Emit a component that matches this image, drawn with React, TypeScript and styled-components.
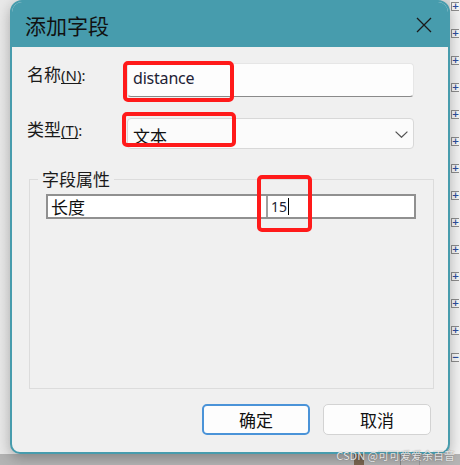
import React from 'react';
import styled, { createGlobalStyle } from 'styled-components';

const GlobalStyle = createGlobalStyle`
  html, body {
    margin: 0;
    padding: 0;
  }
  body {
    font-family: 'Noto Sans', 'Noto Sans CJK SC', sans-serif;
    background: #ececec;
  }
`;

const TEAL = '#479cad';

const Page = styled.div`
  position: relative;
  width: 460px;
  height: 465px;
  overflow: hidden;
  background: #ececec;
`;

const Backdrop = styled.div`
  display: flex;
  flex-direction: column;
  height: 100%;
`;

const Upper = styled.div`
  flex: 1;
  display: flex;
`;

const MainArea = styled.div`
  flex: 1;
  background: linear-gradient(to right, #e9e9e9, #dcdcdc);
`;

const TreeColumn = styled.div`
  width: 9px;
  padding: 2px 0 0 1px;
  display: flex;
  flex-direction: column;
  gap: 18px;
  background: #f2f2f2;
`;

const Expander = styled.div`
  width: 8px;
  height: 9px;
  box-sizing: border-box;
  border: 1px solid #8c8c8c;
  border-right: none;
  border-radius: 1px 0 0 1px;
  background: #f6f6f6;
  display: flex;
  align-items: center;
  justify-content: center;
  color: #2d4f9e;
  font-size: 9px;
  line-height: 1;
  font-family: 'DejaVu Sans', sans-serif;
  font-weight: bold;
`;

const BottomBar = styled.div`
  height: 11px;
  display: flex;
  background: #b4b4b4;
`;

const BarGap = styled.div<{ $w: number }>`
  width: ${({ $w }) => $w}px;
`;

const BarMark = styled.div<{ $w: number; $c: string }>`
  width: ${({ $w }) => $w}px;
  background: ${({ $c }) => $c};
`;

const Dialog = styled.div`
  position: absolute;
  left: 10px;
  top: 0;
  width: 440px;
  height: 454px;
  box-sizing: border-box;
  border: 2px solid ${TEAL};
  border-radius: 12px 12px 10px 10px;
  background: #f0f0f0;
  box-shadow: 0 4px 14px rgba(0, 0, 0, 0.28);
  display: flex;
  flex-direction: column;
  overflow: hidden;
`;

const TitleBar = styled.div`
  height: 45px;
  flex: none;
  background: ${TEAL};
  display: flex;
  align-items: center;
  justify-content: space-between;
  padding: 0 16px 0 13px;
`;

const Title = styled.div`
  font-family: 'Noto Sans CJK SC', sans-serif;
  font-size: 21px;
  color: #111;
  line-height: 1;
  margin-top: 1px;
`;

const CloseIcon = styled.svg`
  width: 16px;
  height: 16px;
  display: block;
  margin-top: 1px;
`;

const Body = styled.div`
  flex: 1;
  display: flex;
  flex-direction: column;
`;

const FormRow = styled.div<{ $top: number; $h: number }>`
  display: grid;
  grid-template-columns: 100px 287px;
  margin: ${({ $top }) => $top}px 0 0 15px;
  height: ${({ $h }) => $h}px;
`;

const Label = styled.label<{ $dy: number }>`
  font-family: 'Noto Sans CJK SC', sans-serif;
  font-size: 17px;
  line-height: 20px;
  color: #1a1a1a;
  margin-top: ${({ $dy }) => $dy}px;
`;

const Key = styled.span`
  font-family: 'Noto Sans', sans-serif;
  font-size: 15px;
  text-decoration: underline;
  text-underline-offset: 2px;
`;

const Suffix = styled.span`
  font-family: 'Noto Sans', sans-serif;
  font-size: 15px;
`;

const FieldWrap = styled.div`
  position: relative;
`;

const TextBox = styled.div`
  height: 100%;
  box-sizing: border-box;
  background: #fdfdfd;
  border: 1px solid #e6e6e6;
  border-bottom: 1px solid #8a8a8a;
  border-radius: 4px;
  padding: 3px 0 0 5px;
  font-family: 'Noto Sans', sans-serif;
  font-size: 16px;
  letter-spacing: -0.2px;
  color: #1e2235;
`;

const Select = styled.div`
  height: 100%;
  box-sizing: border-box;
  background: #fbfbfb;
  border: 1px solid #d8d8d8;
  border-radius: 4px;
  padding: 0 5px 0 5px;
  display: flex;
  align-items: center;
  justify-content: space-between;
  font-family: 'Noto Sans CJK SC', sans-serif;
  font-size: 17px;
  color: #111;
`;

const SelectText = styled.span`
  margin-top: 4px;
`;

const Chevron = styled.svg`
  width: 13px;
  height: 7px;
  display: block;
  margin-top: 2px;
`;

const Highlight = styled.div<{ $x: number; $y: number; $w: number; $h: number }>`
  position: absolute;
  left: ${({ $x }) => $x}px;
  top: ${({ $y }) => $y}px;
  width: ${({ $w }) => $w}px;
  height: ${({ $h }) => $h}px;
  box-sizing: border-box;
  border: 4px solid #ff1a1a;
  border-radius: 5px;
  pointer-events: none;
`;

const Group = styled.fieldset`
  margin: 24px 0 0 17px;
  padding: 0 0 0 16px;
  width: 405px;
  height: 217px;
  box-sizing: border-box;
  border: 1px solid #dcdcdc;
  border-radius: 0;
`;

const Legend = styled.legend`
  margin-left: -8px;
  padding: 0 4px;
  font-family: 'Noto Sans CJK SC', sans-serif;
  font-size: 17px;
  line-height: 14px;
  color: #1a1a1a;
`;

const PropRow = styled.div`
  position: relative;
  margin-top: 8px;
  width: 370px;
  height: 25px;
  box-sizing: border-box;
  border: 2px solid #909090;
  background: #fff;
  display: grid;
  grid-template-columns: 220px 1fr;
`;

const PropName = styled.div`
  border-right: 2px solid #a0a0a0;
  padding-left: 3px;
  font-family: 'Noto Sans CJK SC', sans-serif;
  font-size: 17px;
  line-height: 21px;
  color: #111;
`;

const PropValue = styled.div`
  padding-left: 3px;
  display: flex;
  align-items: center;
  font-family: 'Noto Sans', sans-serif;
  font-size: 14px;
  color: #1e2235;
`;

const Caret = styled.span`
  width: 1px;
  height: 17px;
  background: #000;
  margin-left: 1px;
`;

const ButtonRow = styled.div`
  margin-top: auto;
  display: flex;
  justify-content: flex-end;
  gap: 13px;
  padding: 0 17px 17px 0;
`;

const Button = styled.button<{ $primary?: boolean }>`
  width: 108px;
  height: 31px;
  box-sizing: border-box;
  border-radius: 5px;
  background: #fdfdfd;
  border: ${({ $primary }) => ($primary ? '2px solid #4a93d8' : '1px solid #d3d3d3')};
  font-family: 'Noto Sans CJK SC', sans-serif;
  font-size: 17px;
  color: #111;
  padding: 0;
  cursor: pointer;
`;

const Watermark = styled.div`
  position: absolute;
  right: 5px;
  bottom: 4px;
  font-family: 'Noto Sans CJK SC', sans-serif;
  font-size: 11px;
  line-height: 12px;
  color: rgba(255, 255, 255, 0.85);
  text-shadow: 0 0 1px rgba(90, 90, 90, 0.9);
  white-space: nowrap;
`;

const expanders = Array.from({ length: 14 }, (_, i) => (i === 13 ? '−' : '+'));

export default function App() {
  return (
    <Page>
      <GlobalStyle />
      <Backdrop>
        <Upper>
          <MainArea />
          <TreeColumn>
            {expanders.map((sign, i) => (
              <Expander key={i}>{sign}</Expander>
            ))}
          </TreeColumn>
        </Upper>
        <BottomBar>
          <BarGap $w={354} />
          <BarMark $w={10} $c="#7a6650" />
          <BarGap $w={36} />
          <BarMark $w={1} $c="#888" />
          <BarGap $w={18} />
          <BarMark $w={1} $c="#999" />
        </BottomBar>
      </Backdrop>

      <Dialog>
        <TitleBar>
          <Title>添加字段</Title>
          <CloseIcon viewBox="0 0 16 16">
            <path d="M1 1 L15 15 M15 1 L1 15" stroke="#1a1a1a" strokeWidth="1.3" fill="none" />
          </CloseIcon>
        </TitleBar>
        <Body>
          <FormRow $top={16} $h={34}>
            <Label $dy={1}>
              名称<Key>(N)</Key>
              <Suffix>:</Suffix>
            </Label>
            <FieldWrap>
              <TextBox>distance</TextBox>
              <Highlight $x={-4} $y={-2} $w={111} $h={41} />
            </FieldWrap>
          </FormRow>
          <FormRow $top={21} $h={30}>
            <Label $dy={1}>
              类型<Key>(T)</Key>
              <Suffix>:</Suffix>
            </Label>
            <FieldWrap>
              <Select>
                <SelectText>文本</SelectText>
                <Chevron viewBox="0 0 13 7">
                  <path d="M0.6 0.6 L6.5 6.3 L12.4 0.6" stroke="#555" strokeWidth="1.2" fill="none" />
                </Chevron>
              </Select>
              <Highlight $x={-5} $y={-6} $w={114} $h={35} />
            </FieldWrap>
          </FormRow>
          <Group>
            <Legend>字段属性</Legend>
            <PropRow>
              <PropName>长度</PropName>
              <PropValue>
                15
                <Caret />
              </PropValue>
              <Highlight $x={209} $y={-21} $w={55} $h={57} />
            </PropRow>
          </Group>
          <ButtonRow>
            <Button $primary>确定</Button>
            <Button>取消</Button>
          </ButtonRow>
        </Body>
      </Dialog>
      <Watermark>CSDN @可可爱爱余百音</Watermark>
    </Page>
  );
}
